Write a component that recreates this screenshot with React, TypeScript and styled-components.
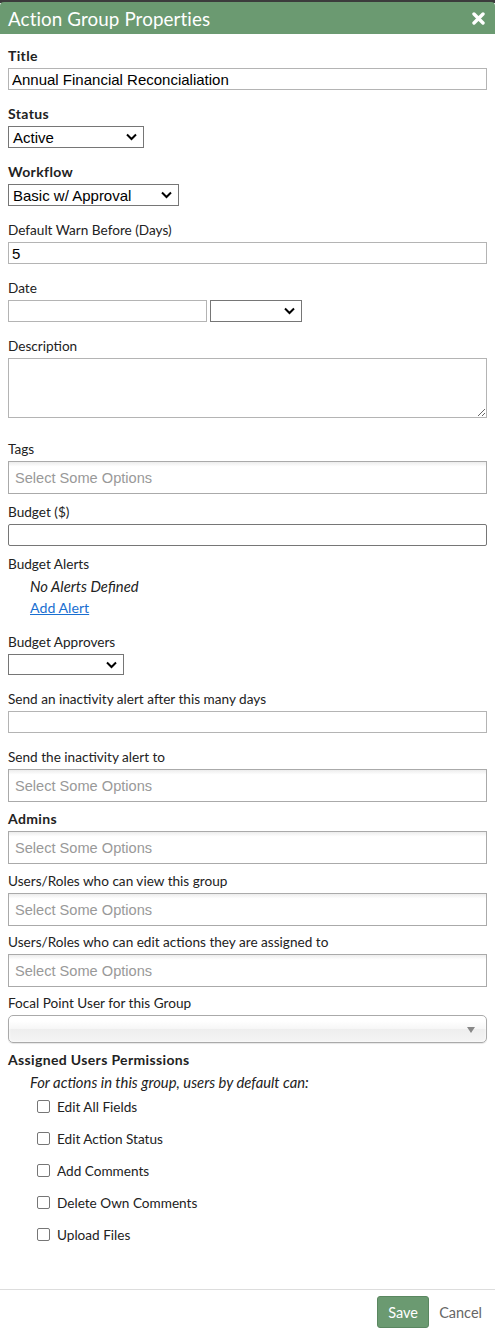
import React from 'react';
import styled, { createGlobalStyle } from 'styled-components';

const GlobalStyle = createGlobalStyle`
  html, body {
    margin: 0;
    padding: 0;
    background: #fff;
  }
  * {
    box-sizing: border-box;
  }
`;

const green = '#6b9a71';

const Backdrop = styled.div`
  height: 3px;
  background: #3c3c3c;
`;

const Dialog = styled.div`
  width: 495px;
  font-family: Lato, 'Noto Sans', sans-serif;
  font-size: 13.6px;
  color: #222;
`;

const Header = styled.div`
  height: 32px;
  display: flex;
  align-items: center;
  justify-content: space-between;
  padding: 0 10px 0 8px;
  background: ${green};
  border-radius: 4px 4px 0 0;
  margin-top: -1px;
`;

const HeaderTitle = styled.h1`
  margin: 0;
  font-size: 18.8px;
  font-weight: 400;
  color: #fff;
  letter-spacing: 0.1px;
`;

const CloseButton = styled.button`
  border: none;
  background: none;
  padding: 0;
  display: flex;
  cursor: pointer;
`;

const Body = styled.div`
  padding: 14px 8px 0 8px;
`;

const Field = styled.div<{ $space?: number }>`
  display: flex;
  flex-direction: column;
  align-items: flex-start;
  margin-bottom: ${p => (p.$space ?? 16)}px;
`;

const Label = styled.label<{ $bold?: boolean }>`
  display: block;
  line-height: 16px;
  margin-bottom: 4px;
  font-weight: ${p => (p.$bold ? 700 : 400)};
  font-size: ${p => (p.$bold ? '14px' : 'inherit')};
  letter-spacing: ${p => (p.$bold ? '0.35px' : '0')};
`;

const TextInput = styled.input<{ $rounded?: boolean }>`
  display: block;
  width: 100%;
  height: 22px;
  padding: 0 3px;
  border: 1px solid ${p => (p.$rounded ? '#767676' : '#b4b4b4')};
  border-radius: ${p => (p.$rounded ? '2px' : '0')};
  font-family: 'Liberation Sans', Arial, sans-serif;
  font-size: 15px;
  color: #000;
  outline: none;
`;

const Row = styled.div`
  display: flex;
  gap: 3px;
`;

const SelectBox = styled.div<{ $width: number }>`
  position: relative;
  width: ${p => p.$width}px;
  height: 22px;
  border: 1px solid #767676;
  display: flex;
  align-items: center;
  padding: 0 4px;
  font-family: 'Liberation Sans', Arial, sans-serif;
  font-size: 15px;
  color: #000;
  background: #fff;

  svg {
    position: absolute;
    right: 6px;
    top: 6px;
  }
`;

const TextArea = styled.textarea`
  display: block;
  width: 100%;
  height: 60px;
  border: 1px solid #b4b4b4;
  resize: vertical;
  outline: none;
`;

const MultiChoice = styled.div`
  width: 100%;
  height: 33px;
  border: 1px solid #aaa;
  background: linear-gradient(#eee 1%, #fff 15%);
  display: flex;
  align-items: center;
  padding: 0 6px;
  font-family: 'Liberation Sans', Arial, sans-serif;
  font-size: 14.6px;
  color: #999;
`;

const SingleChoice = styled.div`
  position: relative;
  width: 100%;
  height: 28px;
  border: 1px solid #aaa;
  border-radius: 5px;
  background: linear-gradient(#fff 20%, #f6f6f6 50%, #eee 52%, #f4f4f4 100%);
  box-shadow: 0 0 3px #fff inset, 0 1px 1px rgba(0, 0, 0, 0.1);

  &::after {
    content: '';
    position: absolute;
    right: 11px;
    top: 11px;
    border-left: 4px solid transparent;
    border-right: 4px solid transparent;
    border-top: 6px solid #888;
  }
`;

const Indented = styled.div`
  padding-left: 22px;
  line-height: 22px;
`;

const Note = styled.div`
  font-style: italic;
  font-size: 14.8px;
  line-height: 22px;
`;

const Link = styled.a`
  color: #1a6fd1;
  text-decoration: underline;
  cursor: pointer;
  font-size: 14.2px;
`;

const CheckList = styled.div`
  display: flex;
  flex-direction: column;
  gap: 13px;
  padding: 5px 0 0 29px;
`;

const CheckRow = styled.label`
  display: flex;
  align-items: center;
  gap: 7px;
  line-height: 19px;
`;

const CheckBox = styled.input`
  appearance: none;
  margin: 0 0 3px 0;
  width: 13px;
  height: 13px;
  border: 1px solid #767676;
  border-radius: 2px;
  background: #fff;
`;

const Footer = styled.div`
  margin-top: 44px;
  border-top: 1px solid #ddd;
  display: flex;
  justify-content: flex-end;
  align-items: center;
  gap: 10px;
  padding: 6px 13px 7px 0;
`;

const SaveButton = styled.button`
  width: 52px;
  height: 32px;
  border: 1px solid #5a8760;
  border-radius: 3px;
  background: ${green};
  color: #fff;
  font-family: Lato, 'Noto Sans', sans-serif;
  font-size: 14.5px;
`;

const CancelButton = styled.button`
  border: none;
  background: none;
  padding: 0;
  color: #666;
  font-family: Lato, 'Noto Sans', sans-serif;
  font-size: 14.5px;
`;

const Chevron = () => (
  <svg width="11" height="8" viewBox="0 0 11 8">
    <path d="M1 1.5 L5.5 6 L10 1.5" fill="none" stroke="#000" strokeWidth="2" />
  </svg>
);

const CloseIcon = () => (
  <svg width="13" height="13" viewBox="0 0 13 13">
    <path d="M2 2 L11 11 M11 2 L2 11" stroke="#fff" strokeWidth="3.4" strokeLinecap="round" />
  </svg>
);

const permissions = [
  'Edit All Fields',
  'Edit Action Status',
  'Add Comments',
  'Delete Own Comments',
  'Upload Files',
];

const App: React.FC = () => (
  <>
    <GlobalStyle />
    <Backdrop />
    <Dialog>
      <Header>
        <HeaderTitle>Action Group Properties</HeaderTitle>
        <CloseButton aria-label="Close">
          <CloseIcon />
        </CloseButton>
      </Header>
      <Body>
        <Field>
          <Label $bold>Title</Label>
          <TextInput defaultValue="Annual Financial Reconcialiation" />
        </Field>
        <Field>
          <Label $bold>Status</Label>
          <SelectBox $width={136}>
            Active
            <Chevron />
          </SelectBox>
        </Field>
        <Field>
          <Label $bold>Workflow</Label>
          <SelectBox $width={171}>
            Basic w/ Approval
            <Chevron />
          </SelectBox>
        </Field>
        <Field>
          <Label>Default Warn Before (Days)</Label>
          <TextInput defaultValue="5" />
        </Field>
        <Field>
          <Label>Date</Label>
          <Row>
            <TextInput style={{ width: 199 }} />
            <SelectBox $width={92}>
              <Chevron />
            </SelectBox>
          </Row>
        </Field>
        <Field $space={23}>
          <Label>Description</Label>
          <TextArea />
        </Field>
        <Field $space={10}>
          <Label>Tags</Label>
          <MultiChoice>Select Some Options</MultiChoice>
        </Field>
        <Field $space={10}>
          <Label>Budget ($)</Label>
          <TextInput $rounded />
        </Field>
        <Field $space={15}>
          <Label style={{ marginBottom: 3 }}>Budget Alerts</Label>
          <Indented>
            <Note>No Alerts Defined</Note>
            <Link>Add Alert</Link>
          </Indented>
        </Field>
        <Field>
          <Label>Budget Approvers</Label>
          <SelectBox $width={116} style={{ height: 21 }}>
            <Chevron />
          </SelectBox>
        </Field>
        <Field $space={16}>
          <Label>Send an inactivity alert after this many days</Label>
          <TextInput />
        </Field>
        <Field $space={9}>
          <Label>Send the inactivity alert to</Label>
          <MultiChoice>Select Some Options</MultiChoice>
        </Field>
        <Field $space={9}>
          <Label $bold>Admins</Label>
          <MultiChoice>Select Some Options</MultiChoice>
        </Field>
        <Field $space={8}>
          <Label>Users/Roles who can view this group</Label>
          <MultiChoice>Select Some Options</MultiChoice>
        </Field>
        <Field $space={8}>
          <Label>Users/Roles who can edit actions they are assigned to</Label>
          <MultiChoice>Select Some Options</MultiChoice>
        </Field>
        <Field $space={9}>
          <Label>Focal Point User for this Group</Label>
          <SingleChoice />
        </Field>
        <Field $space={0}>
          <Label $bold style={{ marginBottom: 3 }}>Assigned Users Permissions</Label>
          <Indented>
            <Note>For actions in this group, users by default can:</Note>
          </Indented>
        </Field>
        <CheckList>
          {permissions.map(p => (
            <CheckRow key={p}>
              <CheckBox type="checkbox" />
              {p}
            </CheckRow>
          ))}
        </CheckList>
      </Body>
      <Footer>
        <SaveButton>Save</SaveButton>
        <CancelButton>Cancel</CancelButton>
      </Footer>
    </Dialog>
  </>
);

export default App;
